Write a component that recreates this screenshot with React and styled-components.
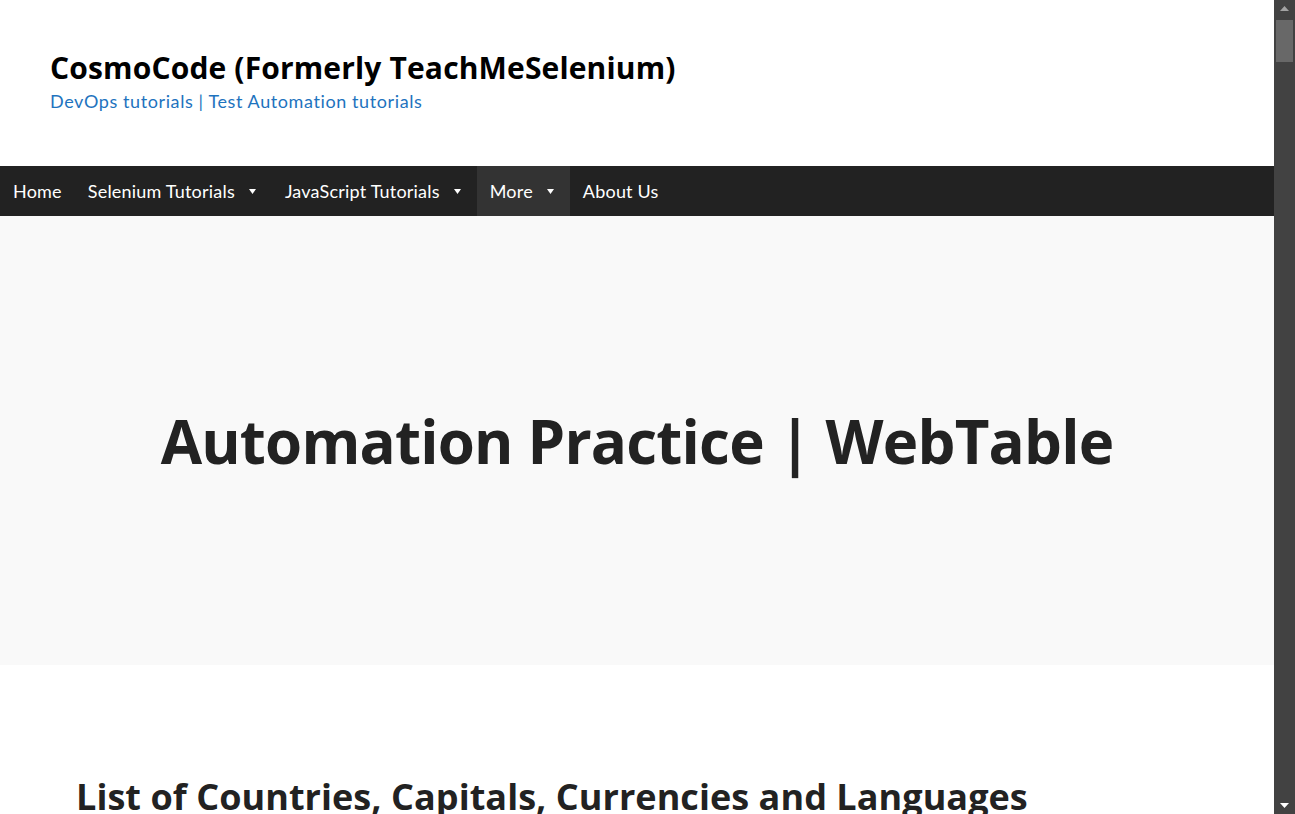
import React from "react";
import styled, { createGlobalStyle } from "styled-components";

const GlobalStyle = createGlobalStyle`
  html, body {
    margin: 0;
    padding: 0;
    background: #ffffff;
    font-family: Lato, "Open Sans", sans-serif;
    color: #222222;
    overflow: hidden;
  }
`;

const menu = [
  { label: "Home" },
  { label: "Selenium Tutorials", sub: true },
  { label: "JavaScript Tutorials", sub: true },
  { label: "More", sub: true, active: true },
  { label: "About Us" },
];

function Caret() {
  return (
    <svg width="7" height="5" viewBox="0 0 7 5">
      <path d="M0 0 L7 0 L3.5 5 Z" fill="#ffffff" />
    </svg>
  );
}

function Arrow({ up, color }) {
  return (
    <svg width="9" height="5" viewBox="0 0 9 5">
      <path d={up ? "M0 5 L9 5 L4.5 0 Z" : "M0 0 L9 0 L4.5 5 Z"} fill={color} />
    </svg>
  );
}

export default function App() {
  return (
    <>
      <GlobalStyle />
      <Viewport>
        <Page>
          <Header>
            <SiteTitle>CosmoCode (Formerly TeachMeSelenium)</SiteTitle>
            <Tagline>DevOps tutorials | Test Automation tutorials</Tagline>
          </Header>
          <Nav>
            {menu.map((m) => (
              <NavItem key={m.label} $active={m.active} $sub={m.sub}>
                {m.label}
                {m.sub && <Caret />}
              </NavItem>
            ))}
          </Nav>
          <Hero>
            <HeroTitle>Automation Practice | WebTable</HeroTitle>
          </Hero>
          <Content>
            <SectionTitle>List of Countries, Capitals, Currencies and Languages</SectionTitle>
          </Content>
        </Page>
        <ScrollBar>
          <ScrollButton>
            <Arrow up color="#a3a3a3" />
          </ScrollButton>
          <ScrollTrack>
            <ScrollThumb />
          </ScrollTrack>
          <ScrollButton>
            <Arrow color="#ffffff" />
          </ScrollButton>
        </ScrollBar>
      </Viewport>
    </>
  );
}

const Viewport = styled.div`
  display: flex;
  height: 100vh;
  overflow: hidden;
`;

const Page = styled.div`
  flex: 1;
  min-width: 0;
  overflow: hidden;
`;

const Header = styled.header`
  height: 166px;
  box-sizing: border-box;
  padding: 50px 50px 0;
`;

const SiteTitle = styled.div`
  font-family: "Open Sans", sans-serif;
  font-size: 30px;
  font-weight: 700;
  line-height: 36px;
  letter-spacing: 0.15px;
  color: #000000;
`;

const Tagline = styled.div`
  font-size: 18px;
  line-height: 31px;
  letter-spacing: 0.6px;
  color: #1e73be;
`;

const Nav = styled.nav`
  display: flex;
  height: 50px;
  background: #222222;
`;

const NavItem = styled.div`
  display: flex;
  align-items: center;
  gap: 14px;
  padding: 0 ${(p) => (p.$sub ? "16px" : "13px")} 0 13px;
  font-size: 18px;
  letter-spacing: 0.2px;
  color: #ffffff;
  background: ${(p) => (p.$active ? "#333333" : "transparent")};
`;

const Hero = styled.section`
  height: 449px;
  background: #f9f9f9;
  display: flex;
  align-items: center;
  justify-content: center;
`;

const HeroTitle = styled.h1`
  margin: 0;
  font-family: "Open Sans", sans-serif;
  font-size: 60px;
  font-weight: 700;
  letter-spacing: -0.8px;
  color: #222222;
`;

const Content = styled.main`
  padding: 110px 76px 60px;
`;

const SectionTitle = styled.h2`
  margin: 0;
  font-family: "Open Sans", sans-serif;
  font-size: 36px;
  font-weight: 700;
  line-height: 1.2;
  letter-spacing: 0.05px;
  color: #222222;
  white-space: nowrap;
`;

const ScrollBar = styled.div`
  width: 21px;
  flex-shrink: 0;
  display: flex;
  flex-direction: column;
  background: #424242;
`;

const ScrollButton = styled.div`
  height: 17px;
  display: flex;
  align-items: center;
  justify-content: center;
`;

const ScrollTrack = styled.div`
  flex: 1;
  padding: 3px 2px 0;
`;

const ScrollThumb = styled.div`
  height: 42px;
  background: #686868;
`;
